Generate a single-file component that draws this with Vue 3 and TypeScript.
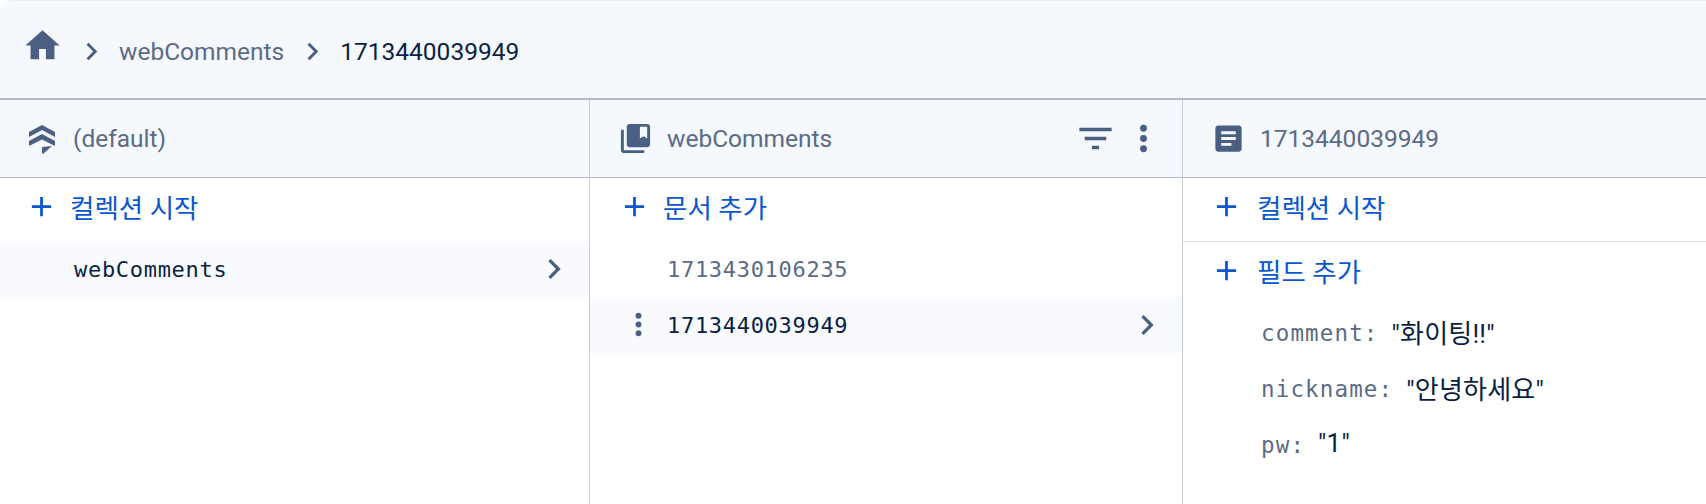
<template>
  <div class="console">
    <nav class="crumbs">
      <svg class="home" viewBox="0 0 24 24"><path d="M10 20v-6h4v6h5v-8h3L12 3 2 12h3v8z" /></svg>
      <svg class="chev" viewBox="0 0 24 24"><path d="M10 6 8.59 7.41 13.17 12l-4.58 4.59L10 18l6-6z" /></svg>
      <span class="crumb">webComments</span>
      <svg class="chev" viewBox="0 0 24 24"><path d="M10 6 8.59 7.41 13.17 12l-4.58 4.59L10 18l6-6z" /></svg>
      <span class="crumb current">1713440039949</span>
    </nav>

    <div class="columns">
      <section class="col col-root">
        <header class="col-head">
          <svg class="head-icon" viewBox="0 0 35 35">
            <path d="M18 4 31 11v5L18 9 5 16v-5zM18 13l13 7v5l-13-6.500L5 25v-5z" />
            <path d="M18 26l10-1-9 8-1-1z" />
          </svg>
          <span>(default)</span>
        </header>
        <div class="add-row">
          <svg class="plus" viewBox="0 0 24 24"><path d="M19 13h-6v6h-2v-6H5v-2h6V5h2v6h6v2z" /></svg>
          <span class="add-text">컬렉션 시작</span>
        </div>
        <div class="item selected">
          <span class="mono strong">webComments</span>
          <svg class="row-chev" viewBox="0 0 24 24"><path d="M10 6 8.59 7.41 13.17 12l-4.58 4.59L10 18l6-6z" /></svg>
        </div>
      </section>

      <section class="col col-docs">
        <header class="col-head">
          <svg class="head-icon" viewBox="0 0 24 24">
            <path d="M4 6H2v14c0 1.100.9 2 2 2h14v-2H4V6zm16-4H8c-1.100 0-2 .9-2 2v12c0 1.100.9 2 2 2h12c1.100 0 2-.9 2-2V4c0-1.100-.9-2-2-2zm0 10-2.500-1.500L15 12V4h5v8z" />
          </svg>
          <span>webComments</span>
          <div class="head-actions">
            <svg class="action filter" viewBox="0 0 24 24"><path d="M10 18h4v-2h-4v2zM3 6v2h18V6H3zm3 7h12v-2H6v2z" /></svg>
            <svg class="action" viewBox="0 0 24 24"><circle cx="12" cy="6" r="2" /><circle cx="12" cy="12" r="2" /><circle cx="12" cy="18" r="2" /></svg>
          </div>
        </header>
        <div class="add-row">
          <svg class="plus" viewBox="0 0 24 24"><path d="M19 13h-6v6h-2v-6H5v-2h6V5h2v6h6v2z" /></svg>
          <span class="add-text">문서 추가</span>
        </div>
        <div class="item">
          <span class="mono">1713430106235</span>
        </div>
        <div class="item selected">
          <svg class="row-dots" viewBox="0 0 24 24"><circle cx="12" cy="6" r="2" /><circle cx="12" cy="12" r="2" /><circle cx="12" cy="18" r="2" /></svg>
          <span class="mono strong">1713440039949</span>
          <svg class="row-chev" viewBox="0 0 24 24"><path d="M10 6 8.59 7.41 13.17 12l-4.58 4.59L10 18l6-6z" /></svg>
        </div>
      </section>

      <section class="col col-fields">
        <header class="col-head">
          <svg class="head-icon" viewBox="0 0 24 24">
            <path d="M19 3H5c-1.100 0-2 .9-2 2v14c0 1.100.9 2 2 2h14c1.100 0 2-.9 2-2V5c0-1.100-.9-2-2-2zm-5 14H7v-2h7v2zm3-4H7v-2h10v2zm0-4H7V7h10v2z" />
          </svg>
          <span>1713440039949</span>
        </header>
        <div class="add-row ruled">
          <svg class="plus" viewBox="0 0 24 24"><path d="M19 13h-6v6h-2v-6H5v-2h6V5h2v6h6v2z" /></svg>
          <span class="add-text">컬렉션 시작</span>
        </div>
        <div class="add-row">
          <svg class="plus" viewBox="0 0 24 24"><path d="M19 13h-6v6h-2v-6H5v-2h6V5h2v6h6v2z" /></svg>
          <span class="add-text">필드 추가</span>
        </div>
        <div v-for="f in fields" :key="f.name" class="field">
          <span class="mono key">{{ f.name }}:</span>
          <span class="value">"{{ f.value }}"</span>
        </div>
      </section>
    </div>
  </div>
</template>

<script setup lang="ts">
const fields = [
  { name: 'comment', value: '화이팅!!' },
  { name: 'nickname', value: '안녕하세요' },
  { name: 'pw', value: '1' }
]
</script>

<style>
body {
  background: #fff;
  overflow: hidden;
}
</style>

<style scoped>
.console {
  width: 1706px;
  height: 504px;
  display: flex;
  flex-direction: column;
  font-family: Roboto, "Noto Sans CJK KR", sans-serif;
  font-size: 24.5px;
  color: #5b6b86;
  background: #fff;
}

.crumbs {
  height: 100px;
  box-sizing: border-box;
  display: flex;
  align-items: center;
  padding: 3px 0 0 22px;
  background: #f5f8fd;
  border-top: 1px solid #eceef2;
  border-bottom: 2px solid #b4bccc;
  border-top-left-radius: 12px;
  flex-shrink: 0;
}

.crumbs svg,
.col svg {
  fill: #4a5f82;
  flex-shrink: 0;
}

.home {
  width: 41px;
  height: 41px;
  margin-top: -11px;
}

.chev {
  width: 35px;
  height: 35px;
}

.crumbs .chev:nth-of-type(2) {
  margin-left: 11px;
  margin-right: 10px;
}

.crumbs .chev:nth-of-type(3) {
  margin-left: 11px;
  margin-right: 10px;
}

.current {
  color: #0a1f44;
}

.columns {
  flex: 1;
  display: flex;
}

.col {
  display: flex;
  flex-direction: column;
  box-sizing: border-box;
  border-right: 1px solid #c9cdd8;
}

.col-root {
  width: 590px;
}

.col-docs {
  width: 593px;
}

.col-fields {
  flex: 1;
  border-right: none;
}

.col-head {
  height: 78px;
  box-sizing: border-box;
  display: flex;
  align-items: center;
  background: #f5f8fd;
  border-bottom: 1px solid #b4bccc;
  padding: 0 0 1px 24px;
  gap: 14px;
}

.col-docs .col-head,
.col-fields .col-head {
  padding-left: 28px;
}

.head-icon {
  width: 35px;
  height: 35px;
}

.head-actions {
  margin-left: auto;
  display: flex;
  align-items: center;
  gap: 6px;
  padding-right: 18px;
}

.action {
  width: 41px;
  height: 41px;
}

.action.filter {
  width: 43px;
  height: 43px;
}

.add-row {
  height: 63px;
  box-sizing: border-box;
  display: flex;
  align-items: center;
  padding: 0 0 7px 25px;
  gap: 12px;
  color: #0b57d0;
}

.col-docs .add-row {
  padding-left: 28px;
  gap: 12px;
}

.col-fields .add-row {
  padding-left: 27px;
  gap: 14px;
}

.add-row.ruled {
  height: 64px;
  border-bottom: 1px solid #d5d9e0;
}

.col svg.plus {
  width: 33px;
  height: 33px;
  fill: #0b57d0;
}

.add-text {
  font-size: 26.5px;
}

.item {
  height: 56px;
  display: flex;
  align-items: center;
  position: relative;
  padding-left: 74px;
}

.col-docs .item {
  padding-left: 77px;
}

.col-fields .field {
  padding-left: 78px;
}

.item.selected {
  background: #f8fafd;
}

.mono {
  font-family: "DejaVu Sans Mono", "Liberation Mono", monospace;
  font-size: 22px;
  letter-spacing: 0.7px;
}

.mono.key {
  font-size: 22.5px;
  letter-spacing: 1.15px;
}

.strong {
  color: #0a1f44;
}

.row-chev {
  width: 40px;
  height: 40px;
  margin-left: auto;
  margin-right: 15px;
}

.row-dots {
  position: absolute;
  left: 31px;
  top: 10px;
  width: 35px;
  height: 35px;
}

.field {
  height: 56px;
  display: flex;
  align-items: center;
  gap: 13px;
}

.value {
  color: #0a1f44;
  font-size: 26px;
  letter-spacing: 0.2px;
  margin-bottom: 4px;
}
</style>
